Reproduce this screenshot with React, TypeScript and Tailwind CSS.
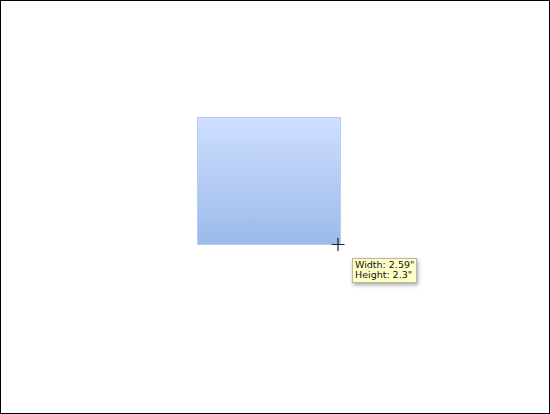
export default function App() {
  return (
    <div className="relative h-[414px] w-[550px] overflow-hidden border border-black bg-white">
      {/* shape being resized */}
      <div className="absolute left-[196px] top-[116px] h-[128px] w-[144px] border border-[#b7cdf0] bg-gradient-to-b from-[#cfdfff] to-[#9bbaea]" />

      {/* crosshair cursor */}
      <svg className="absolute left-[330px] top-[236px]" width="14" height="15" viewBox="0 0 14 15">
        <path d="M7 1v13M0.5 7.5h13" stroke="#222" strokeWidth="1.2" fill="none" />
      </svg>

      {/* size tooltip */}
      <div className="absolute left-[351px] top-[257px] border border-[#b8b8a0] bg-[#ffffc6] px-[2px] pb-[2px] pt-[1px] text-[9.5px] leading-[10px] text-[#111] shadow-[1px_2px_4px_rgba(0,0,0,0.35)] [font-family:'DejaVu_Sans',sans-serif]">
        <div>Width: 2.59"</div>
        <div>Height: 2.3"</div>
      </div>
    </div>
  );
}
